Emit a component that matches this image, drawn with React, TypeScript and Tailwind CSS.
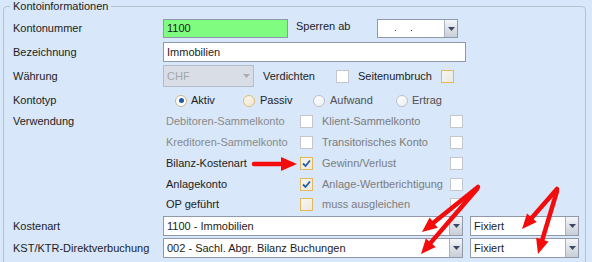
import React from 'react';

// Kontoinformationen – Windows-Forms-like account dialog section

type BoxKind = 'grey' | 'orange';

const Check: React.FC<{ kind?: BoxKind; checked?: boolean }> = ({ kind = 'grey', checked }) => (
  <div
    className={
      'relative w-[13px] h-[13px] shrink-0 border ' +
      (kind === 'orange'
        ? 'border-[#e3b95c] bg-gradient-to-br from-[#f7f5f0] to-[#ebe8e2]'
        : 'border-[#c3c6cb] bg-white')
    }
  >
    {checked && (
      <svg className="absolute left-[1px] top-[1px]" width="9" height="9" viewBox="0 0 9 9">
        <path d="M1 4.5 L3.5 7 L8 1.5" fill="none" stroke="#1f5ea8" strokeWidth="1.8" />
      </svg>
    )}
  </div>
);

const Radio: React.FC<{ kind?: 'grey' | 'orange' | 'on' }> = ({ kind = 'grey' }) => (
  <div
    className={
      'w-[12px] h-[12px] shrink-0 rounded-full border flex items-center justify-center ' +
      (kind === 'orange'
        ? 'border-[#e2bd72] bg-gradient-to-br from-[#fbf7ee] to-[#efe7d6]'
        : kind === 'on'
        ? 'border-[#c9b58c] bg-white'
        : 'border-[#bdc1c7] bg-gradient-to-br from-white to-[#eceef1]')
    }
  >
    {kind === 'on' && <div className="w-[5px] h-[5px] rounded-full bg-[#1d5aa6]" />}
  </div>
);

const DropButton: React.FC<{ disabled?: boolean }> = ({ disabled }) => (
  <div
    className={
      'w-[13px] h-full shrink-0 flex items-center justify-center ' +
      (disabled ? '' : 'border-l border-[#a9b2c0] bg-gradient-to-b from-[#f3f5f8] to-[#c8ced8]')
    }
  >
    <svg width="7" height="4" viewBox="0 0 7 4">
      <path d="M0 0 H7 L3.5 4 Z" fill={disabled ? '#a9adb3' : '#3d4963'} />
    </svg>
  </div>
);

const Combo: React.FC<{ w: string; children?: React.ReactNode; disabled?: boolean }> = ({ w, children, disabled }) => (
  <div
    className={
      'h-full flex border ' +
      w +
      (disabled ? ' border-[#b4bcc8] bg-[#d9dee6] text-[#a2a6ac]' : ' border-[#9099aa] bg-white')
    }
  >
    <div className="flex-1 flex items-center pl-[3px] overflow-hidden whitespace-nowrap">{children}</div>
    <DropButton disabled={disabled} />
  </div>
);

const Label: React.FC<{ children: React.ReactNode }> = ({ children }) => (
  <div className="w-[159px] shrink-0 pl-[9px]">{children}</div>
);

type Row = { label?: string; a: string; aDim?: boolean; aBox: [BoxKind, boolean]; b: string; bBox: BoxKind };

const usageRows: (Row & { h: string })[] = [
  { label: 'Verwendung', a: 'Debitoren-Sammelkonto', aDim: true, aBox: ['grey', false], b: 'Klient-Sammelkonto', bBox: 'grey', h: 'h-[21px]' },
  { a: 'Kreditoren-Sammelkonto', aDim: true, aBox: ['grey', false], b: 'Transitorisches Konto', bBox: 'grey', h: 'h-[21px]' },
  { a: 'Bilanz-Kostenart', aBox: ['orange', true], b: 'Gewinn/Verlust', bBox: 'grey', h: 'h-[21px]' },
  { a: 'Anlagekonto', aBox: ['orange', true], b: 'Anlage-Wertberichtigung', bBox: 'grey', h: 'h-[20px]' },
  { a: 'OP geführt', aBox: ['orange', false], b: 'muss ausgleichen', bBox: 'grey', h: 'h-[20px]' },
];

function arrow(x1: number, y1: number, x2: number, y2: number, head = 15, hw = 13) {
  const dx = x2 - x1;
  const dy = y2 - y1;
  const len = Math.hypot(dx, dy);
  const ux = dx / len;
  const uy = dy / len;
  const bx = x2 - ux * head;
  const by = y2 - uy * head;
  const px = -uy * (hw / 2);
  const py = ux * (hw / 2);
  return (
    <g key={`${x1}-${y1}-${x2}-${y2}`}>
      <line x1={x1} y1={y1} x2={bx + ux * 2} y2={by + uy * 2} stroke="#f40b0b" strokeWidth="4.5" strokeLinecap="round" />
      <polygon points={`${x2},${y2} ${bx + px},${by + py} ${bx - px},${by - py}`} fill="#f40b0b" />
    </g>
  );
}

const App: React.FC = () => {
  return (
    <div
      className="relative w-[592px] h-[262px] overflow-hidden bg-[#d8e7f9] text-[11px] leading-[13px] text-[#1c1c1c]"
      style={{ fontFamily: '"Liberation Sans", Arial, sans-serif' }}
    >
      <fieldset className="ml-[3px] w-[583px] h-[300px] border border-[#b8c2cf] rounded-t-[4px]">
        <legend className="ml-[6px] px-[3px] leading-[13px]">Kontoinformationen</legend>

        {/* Kontonummer */}
        <div className="flex items-center h-[19px] mt-[6px]">
          <Label>Kontonummer</Label>
          <div className="w-[125px] h-full border border-[#9099aa] bg-[#80fc80] flex items-center pl-[3px]">1100</div>
          <div className="w-[89px] pl-[8px] -mt-[4px]">Sperren ab</div>
          <Combo w="w-[81px]">
            <span className="ml-[14px] w-[1px] h-[1px] bg-[#9c1a7c] mt-[4px]" />
            <span className="ml-[15px] w-[1px] h-[1px] bg-[#1a2a9c] mt-[4px]" />
          </Combo>
        </div>

        {/* Bezeichnung */}
        <div className="flex items-center h-[20px] mt-[4px]">
          <Label>Bezeichnung</Label>
          <div className="w-[303px] h-full border border-[#9099aa] bg-white flex items-center pl-[3px]">Immobilien</div>
        </div>

        {/* Währung */}
        <div className="flex items-center h-[22px] mt-[3px]">
          <Label>Währung</Label>
          <Combo w="w-[91px]" disabled>
            CHF
          </Combo>
          <div className="w-[82px] pl-[9px]">Verdichten</div>
          <Check kind="grey" />
          <div className="w-[92px] pl-[9px]">Seitenumbruch</div>
          <Check kind="orange" />
        </div>

        {/* Kontotyp */}
        <div className="flex items-center h-[21px] mt-[3px]">
          <Label>Kontotyp</Label>
          <div className="ml-[12px] w-[68px] flex items-center gap-[4px]">
            <Radio kind="on" />
            <span>Aktiv</span>
          </div>
          <div className="w-[70px] flex items-center gap-[5px]">
            <Radio kind="orange" />
            <span>Passiv</span>
          </div>
          <div className="w-[83px] flex items-center gap-[5px] text-[#505050]">
            <Radio />
            <span>Aufwand</span>
          </div>
          <div className="flex items-center gap-[4px] text-[#505050]">
            <Radio />
            <span>Ertrag</span>
          </div>
        </div>

        {/* Verwendung */}
        {usageRows.map((r) => (
          <div key={r.a} className={'flex items-center ' + r.h}>
            <Label>{r.label ?? ''}</Label>
            <div className={'w-[137px] pl-[3px] ' + (r.aDim ? 'text-[#8a8a8a]' : '')}>{r.a}</div>
            <Check kind={r.aBox[0]} checked={r.aBox[1]} />
            <div className="w-[137px] pl-[9px] text-[#7c7c7c]">{r.b}</div>
            <Check kind={r.bBox} />
          </div>
        ))}

        {/* Kostenart */}
        <div className="flex items-center h-[20px] mt-[2px]">
          <Label>Kostenart</Label>
          <Combo w="w-[300px]">1100 - Immobilien</Combo>
          <div className="w-[7px]" />
          <Combo w="w-[109px]">Fixiert</Combo>
        </div>

        {/* KST/KTR */}
        <div className="flex items-center h-[20px] mt-[2px]">
          <Label>KST/KTR-Direktverbuchung</Label>
          <Combo w="w-[300px]">002 - Sachl. Abgr. Bilanz Buchungen</Combo>
          <div className="w-[7px]" />
          <Combo w="w-[109px]">Fixiert</Combo>
        </div>
      </fieldset>

      {/* red annotation arrows */}
      <svg className="absolute inset-0 pointer-events-none" width="592" height="262">
        {arrow(254, 164, 297, 164, 16, 14)}
        {arrow(478, 187, 422, 232)}
        {arrow(477, 189, 421, 254)}
        {arrow(557, 189, 522, 229)}
        {arrow(557, 191, 538, 254)}
      </svg>
    </div>
  );
};

export default App;
